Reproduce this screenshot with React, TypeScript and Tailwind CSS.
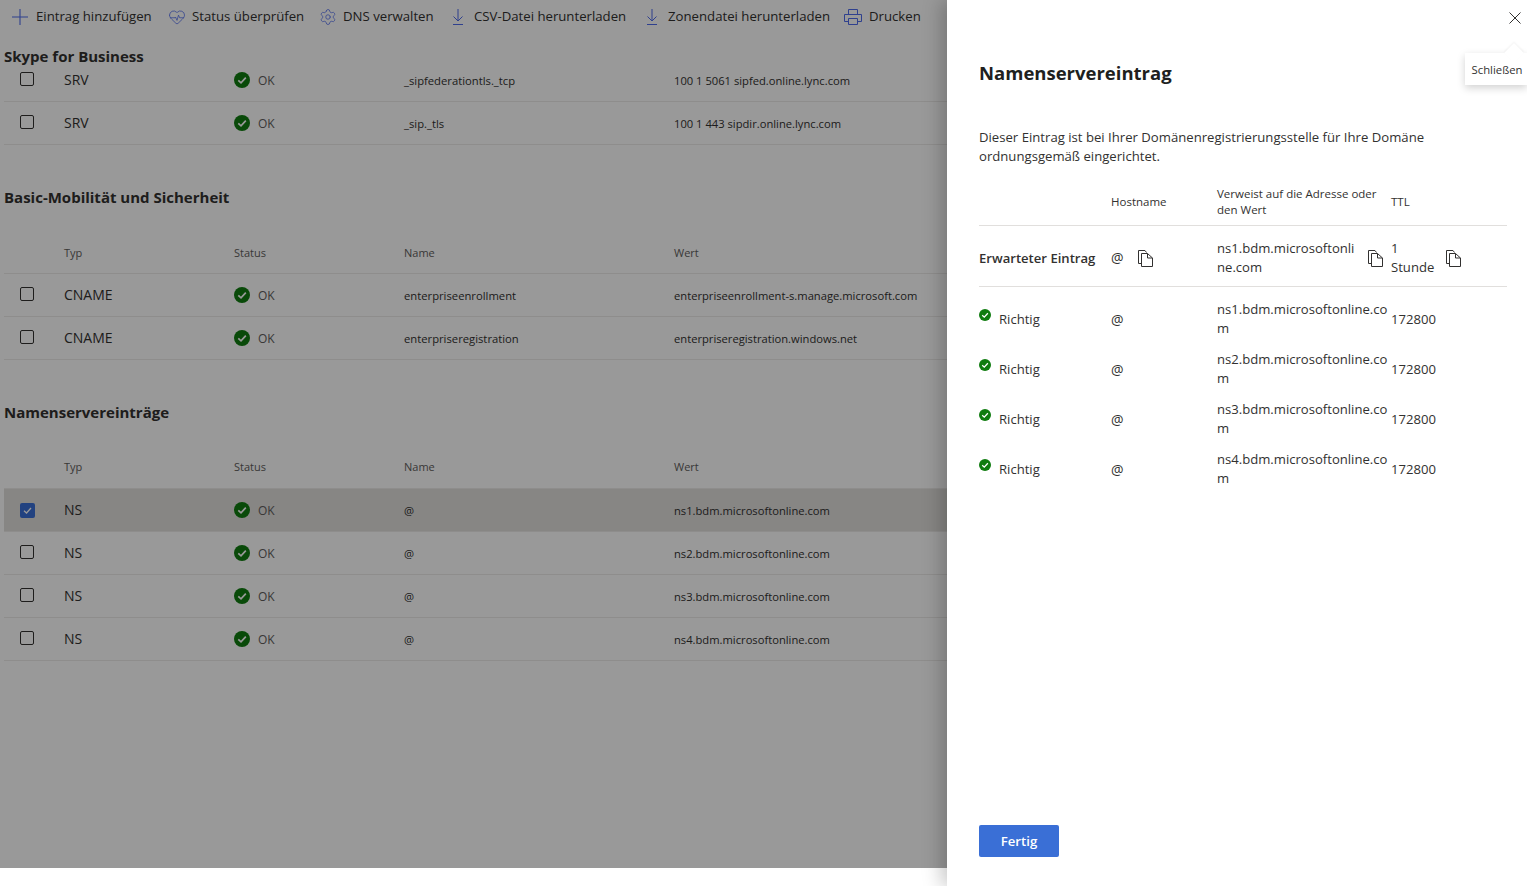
import { Fragment } from "react";
import { HeartPulse, Settings } from "lucide-react";

type DnsRow = { type: string; name: string; value: string; selected?: boolean };

const skypeRows: DnsRow[] = [
  { type: "SRV", name: "_sipfederationtls._tcp", value: "100 1 5061 sipfed.online.lync.com" },
  { type: "SRV", name: "_sip._tls", value: "100 1 443 sipdir.online.lync.com" },
];

const mobilityRows: DnsRow[] = [
  { type: "CNAME", name: "enterpriseenrollment", value: "enterpriseenrollment-s.manage.microsoft.com" },
  { type: "CNAME", name: "enterpriseregistration", value: "enterpriseregistration.windows.net" },
];

const nameServerRows: DnsRow[] = [
  { type: "NS", name: "@", value: "ns1.bdm.microsoftonline.com", selected: true },
  { type: "NS", name: "@", value: "ns2.bdm.microsoftonline.com" },
  { type: "NS", name: "@", value: "ns3.bdm.microsoftonline.com" },
  { type: "NS", name: "@", value: "ns4.bdm.microsoftonline.com" },
];

function PlusIcon() {
  return (
    <svg width="18" height="18" viewBox="0 0 18 18" fill="none" stroke="#4f6bed" strokeWidth="1.1">
      <path d="M9 1v16M1 9h16" />
    </svg>
  );
}

function DownloadIcon() {
  return (
    <svg width="16" height="18" viewBox="0 0 16 18" fill="none" stroke="#4f6bed" strokeWidth="1">
      <path d="M8 1v12M3.500 8.500 8 13l4.500-4.500M3 16.500h10" />
    </svg>
  );
}

function PrinterIcon() {
  return (
    <svg width="18" height="18" viewBox="0 0 18 18" fill="none" stroke="#4f6bed" strokeWidth="1">
      <path d="M4.500 6.500v-5h9v5M4.500 13.500h-4v-7h17v7h-4M4.500 10.500h9v6h-9z" />
    </svg>
  );
}

function CopyIcon() {
  return (
    <svg width="15" height="17" viewBox="0 0 15 17" fill="none" stroke="#323130" strokeWidth="1">
      <path d="M3.500 13.500H.5V.5h6.500l1.500 2" />
      <path d="M3.500 3.500h6l5 4.500v8.500h-11zM9.500 3.500V8h5" />
    </svg>
  );
}

function StatusCheck({ size }: { size: number }) {
  return (
    <svg width={size} height={size} viewBox="0 0 16 16" className="shrink-0">
      <circle cx="8" cy="8" r="8" fill="#107c10" />
      <path d="M4.300 8.300 7 10.800l4.800-5.200" fill="none" stroke="#fff" strokeWidth="1.700" />
    </svg>
  );
}

function ToolbarItem({ icon, label, width }: { icon: React.ReactNode; label: string; width: string }) {
  return (
    <div className={`flex items-center ${width}`}>
      {icon}
      <span className="text-[13.2px] text-[#323130]">{label}</span>
    </div>
  );
}

function Row({ row }: { row: DnsRow }) {
  return (
    <div
      className={`flex h-[43px] items-center border-b border-[#edebe9] ${row.selected ? "bg-[#e1dfdd]" : ""}`}
    >
      <div className="w-[60px] pl-4">
        {row.selected ? (
          <div className="flex h-[15px] w-[15px] items-center justify-center rounded-[2px] bg-[#3a6fd6]">
            <svg width="11" height="11" viewBox="0 0 11 11" fill="none" stroke="#fff" strokeWidth="1.300">
              <path d="M2 5.800 4.500 8 9 3" />
            </svg>
          </div>
        ) : (
          <div className="-mt-[3px] h-[14px] w-[14px] rounded-[2px] border border-[#323130]" />
        )}
      </div>
      <div className="w-[170px] pb-[1px] text-[14px] text-[#323130]">{row.type}</div>
      <div className="flex w-[170px] items-center gap-2">
        <StatusCheck size={16} />
        <span className="pt-[2px] text-[12px] text-[#605e5c]">OK</span>
      </div>
      <div className="w-[270px] pt-[2px] text-[11.25px] text-[#323130]">{row.name}</div>
      <div className="pt-[2px] text-[11.2px] whitespace-nowrap text-[#323130]">{row.value}</div>
    </div>
  );
}

function HeaderRow({ height }: { height: string }) {
  return (
    <div className={`flex items-center border-b border-[#edebe9] text-[11px] text-[#605e5c] ${height}`}>
      <div className="w-[60px]" />
      <div className="w-[170px]">Typ</div>
      <div className="w-[170px]">Status</div>
      <div className="w-[270px]">Name</div>
      <div>Wert</div>
    </div>
  );
}

const records = [
  "ns1.bdm.microsoftonline.co",
  "ns2.bdm.microsoftonline.co",
  "ns3.bdm.microsoftonline.co",
  "ns4.bdm.microsoftonline.co",
];

export default function App() {
  return (
    <div className="relative h-[886px] w-[1527px] overflow-hidden bg-white font-['Open_Sans',sans-serif]">
      <div className="h-[868px] pl-1">
        <div className="flex h-[46px] items-start pt-[7px] pl-[7px]">
          <ToolbarItem icon={<span className="mr-[7px]"><PlusIcon /></span>} label="Eintrag hinzufügen" width="w-[157px]" />
          <ToolbarItem icon={<HeartPulse size={18} strokeWidth={1} color="#4f6bed" className="mr-[6px]" />} label="Status überprüfen" width="w-[151px]" />
          <ToolbarItem icon={<Settings size={18} strokeWidth={1} color="#4f6bed" className="mr-[6px]" />} label="DNS verwalten" width="w-[131px]" />
          <ToolbarItem icon={<span className="mr-2"><DownloadIcon /></span>} label="CSV-Datei herunterladen" width="w-[194px]" />
          <ToolbarItem icon={<span className="mr-2"><DownloadIcon /></span>} label="Zonendatei herunterladen" width="w-[200px]" />
          <ToolbarItem icon={<span className="mr-[7px]"><PrinterIcon /></span>} label="Drucken" width="w-[80px]" />
        </div>

        <h2 className="h-[13px] text-[15px] leading-[20px] font-bold text-[#323130]">Skype for Business</h2>
        {skypeRows.map((row) => (
          <Row key={row.name} row={row} />
        ))}

        <h2 className="mt-[42px] h-[20px] text-[15px] leading-[20px] font-bold text-[#323130]">Basic-Mobilität und Sicherheit</h2>
        <div className="mt-[26px]">
          <HeaderRow height="h-[41px]" />
          {mobilityRows.map((row) => (
            <Row key={row.name} row={row} />
          ))}
        </div>

        <h2 className="mt-[42px] h-[20px] text-[15px] leading-[20px] font-bold text-[#323130]">Namenservereinträge</h2>
        <div className="mt-[25px]">
          <HeaderRow height="h-[42px]" />
          {nameServerRows.map((row) => (
            <Row key={row.value} row={row} />
          ))}
        </div>
      </div>

      {/* Dimmed page behind the panel */}
      <div className="absolute top-0 left-0 h-[868px] w-full bg-black/40" />

      <aside className="absolute top-0 right-0 bottom-0 flex w-[580px] flex-col bg-white pr-5 pb-[29px] pl-8 shadow-[-6px_0_18px_rgba(0,0,0,0.22)]">
        <svg className="absolute top-3 right-[6px]" width="12" height="12" viewBox="0 0 12 12" fill="none" stroke="#323130" strokeWidth="1">
          <path d="M.5.500l11 11M11.500.500l-11 11" />
        </svg>

        <div className="absolute top-[53px] right-0 h-[32px] w-[62px] bg-white pt-px pl-[2px] text-center text-[11.3px] leading-[32px] text-[#323130] shadow-[0_3px_8px_rgba(0,0,0,0.18)]">
          Schließen
          <div className="absolute -top-[7px] right-[6px] h-[14px] w-[14px] rotate-45 bg-white shadow-[-1px_-1px_2px_rgba(0,0,0,0.05)]" />
        </div>

        <h1 className="mt-[60px] text-[18.5px] leading-[26px] font-bold text-[#201f1e]">Namenservereintrag</h1>
        <p className="mt-[42px] text-[13.15px] leading-[19px] text-[#323130]">
          Dieser Eintrag ist bei Ihrer Domänenregistrierungsstelle für Ihre Domäne
          <br />
          ordnungsgemäß eingerichtet.
        </p>

        <div className="mt-[12px] grid grid-cols-[132px_106px_174px_116px] text-[13.1px] text-[#323130]">
          <div className="h-[48px] border-b border-[#e1dfdd]" />
          <div className="flex h-[48px] items-center border-b border-[#e1dfdd] text-[11.5px] font-medium">Hostname</div>
          <div className="flex h-[48px] items-center border-b border-[#e1dfdd] text-[11.5px] leading-[16px] font-medium">
            <span>
              Verweist auf die Adresse oder
              <br />
              den Wert
            </span>
          </div>
          <div className="flex h-[48px] items-center border-b border-[#e1dfdd] text-[11.5px] font-medium">TTL</div>

          <div className="flex h-[61px] items-center border-b border-[#e1dfdd] pt-[5px] font-semibold">Erwarteter Eintrag</div>
          <div className="flex h-[61px] items-center gap-[14px] border-b border-[#e1dfdd] pt-[4px]">
            <span className="-mt-px text-[14px]">@</span>
            <CopyIcon />
          </div>
          <div className="flex h-[61px] items-center justify-between border-b border-[#e1dfdd] pt-[4px] pr-[8px] leading-[19px]">
            <span>
              ns1.bdm.microsoftonli
              <br />
              ne.com
            </span>
            <CopyIcon />
          </div>
          <div className="flex h-[61px] items-center gap-3 border-b border-[#e1dfdd] pt-[4px] leading-[19px]">
            <span>
              1
              <br />
              Stunde
            </span>
            <CopyIcon />
          </div>

          {records.map((record, i) => (
            <Fragment key={record}>
              <div className={`flex h-[50px] items-center gap-2 pt-[2px] ${i === 0 ? "mt-[7px]" : ""}`}>
                <span className="-mt-[10px]"><StatusCheck size={12} /></span>
                Richtig
              </div>
              <div className={`flex h-[50px] items-center pt-[1px] text-[14px] ${i === 0 ? "mt-[7px]" : ""}`}>@</div>
              <div className={`flex h-[50px] items-center leading-[19px] ${i === 0 ? "mt-[7px]" : ""}`}>
                <span>
                  {record}
                  <br />m
                </span>
              </div>
              <div className={`flex h-[50px] items-center pt-[2px] ${i === 0 ? "mt-[7px]" : ""}`}>172800</div>
            </Fragment>
          ))}
        </div>

        <button className="mt-auto h-[32px] w-[80px] rounded-[2px] bg-[#3a6fd6] pt-px text-[13.15px] font-semibold text-white">Fertig</button>
      </aside>
    </div>
  );
}
